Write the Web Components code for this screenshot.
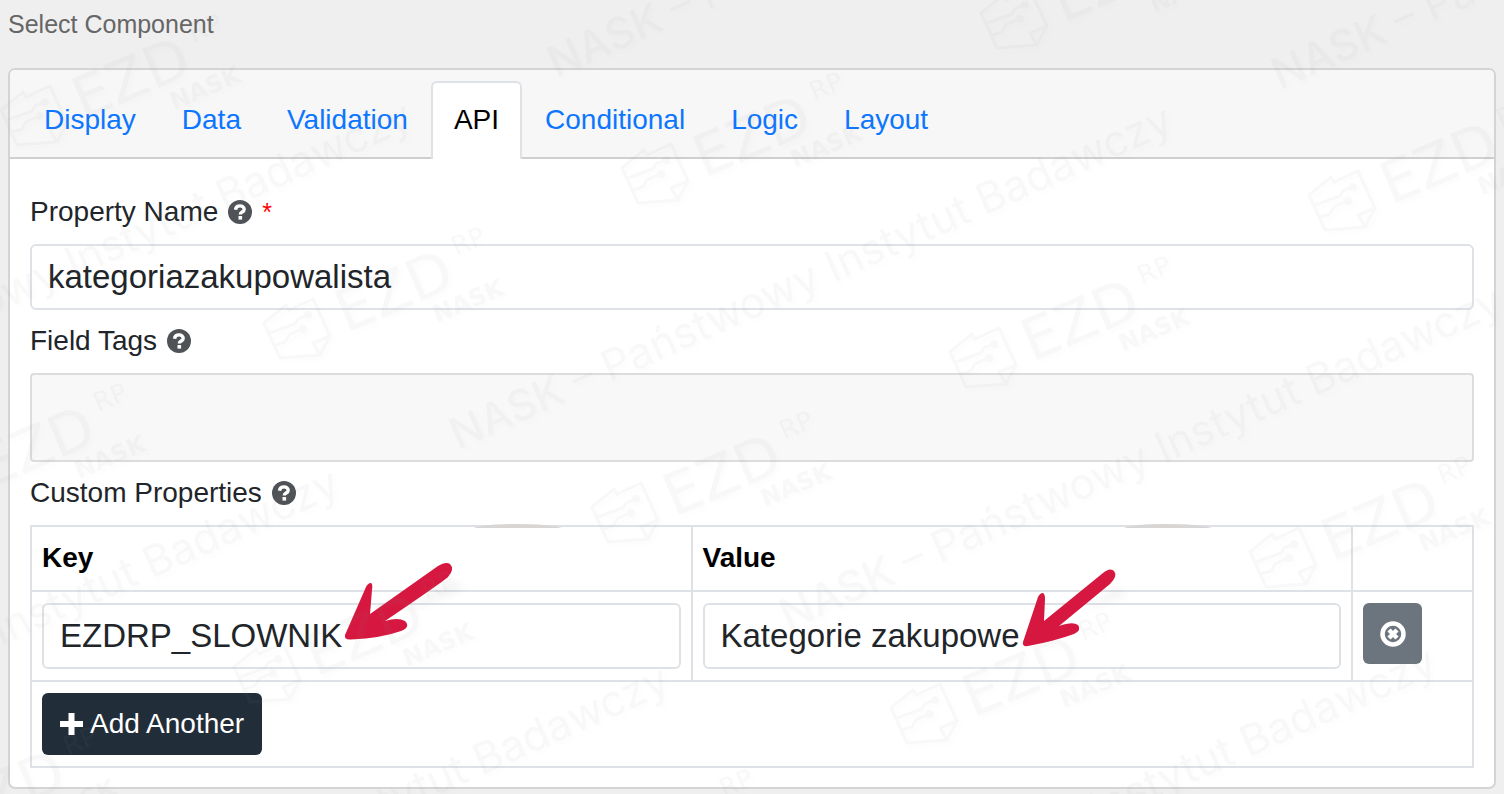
<!DOCTYPE html>
<html lang="en">
<head>
<meta charset="utf-8">
<title>Select Component</title>
<style>
  body {
    margin: 0;
    background: #efefef;
    color: #212529;
    font-family: "Liberation Sans", Arial, sans-serif;
    font-size: 28px;
    line-height: 42px;
  }
</style>
</head>
<body>
<component-editor></component-editor>

<script>
class HelpIcon extends HTMLElement {
  constructor() {
    super();
    this.attachShadow({ mode: 'open' });
    this.shadowRoot.innerHTML = `
      <style>
        :host { display: inline-flex; color: #4f5256; }
        svg { width: 24px; height: 24px; }
      </style>
      <svg viewBox="0 0 24 24" aria-hidden="true">
        <circle cx="12" cy="12" r="12" fill="currentColor"/>
        <path d="M7.500 9.800C7.800 7 9.800 5.900 12 5.900c2.300 0 4.200 1.200 4.200 3.300 0 2.900-3.900 2.700-3.900 5.300" fill="none" stroke="#fff" stroke-width="3.400"/>
        <rect x="10.500" y="16" width="3.600" height="3.600" fill="#fff"/>
      </svg>
    `;
  }
}

customElements.define('help-icon', HelpIcon);

class NavTabs extends HTMLElement {
  constructor() {
    super();
    this.attachShadow({ mode: 'open' });
    this.shadowRoot.innerHTML = `
      <style>
        :host {
          display: block;
          background: #f7f7f7;
          border-bottom: 2px solid #cfcfcf;
          border-radius: 5px 5px 0 0;
        }
        nav {
          display: flex;
          padding: 11px 11px 0;
          margin-bottom: -2px;
        }
        a {
          padding: 16px 21px 18px;
          border: 2px solid transparent;
          border-bottom: 0;
          border-radius: 6px 6px 0 0;
          color: #0d76ff;
          text-decoration: none;
        }
        a.active {
          color: #000;
          background: #fff;
          border-color: #dee2e6;
        }
      </style>
      <nav></nav>
    `;
  }

  connectedCallback() {
    const nav = this.shadowRoot.querySelector('nav');
    this.getAttribute('tabs').split(',').forEach((name) => {
      const link = document.createElement('a');
      link.href = '#' + name.toLowerCase();
      link.textContent = name;
      if (name === this.getAttribute('active')) {
        link.className = 'active';
        link.setAttribute('aria-current', 'page');
      }
      nav.appendChild(link);
    });
  }
}

customElements.define('nav-tabs', NavTabs);

class TextField extends HTMLElement {
  constructor() {
    super();
    this.attachShadow({ mode: 'open' });
    this.shadowRoot.innerHTML = `
      <style>
        :host { display: block; }
        label {
          display: flex;
          align-items: center;
          gap: 10px;
          margin-bottom: 11px;
        }
        label[hidden] { display: none; }
        .required { color: #f00; font-size: 25px; }
        input {
          display: block;
          box-sizing: border-box;
          width: 100%;
          height: 66px;
          padding: 0 16px;
          border: 2px solid #dee2e6;
          border-radius: 6px;
          background: #fff;
          color: #212529;
          font-family: inherit;
          font-size: 33px;
        }
        :host([tags]) input {
          height: 89px;
          background: #f8f8f8;
          border-color: #dcdcdc;
          border-radius: 4px;
        }
      </style>
      <label for="field"><span class="text"></span><help-icon></help-icon></label>
      <input id="field" type="text">
    `;
  }

  connectedCallback() {
    const label = this.shadowRoot.querySelector('label');
    const input = this.shadowRoot.querySelector('input');
    input.value = this.getAttribute('value') || '';
    if (this.hasAttribute('label')) {
      label.querySelector('.text').textContent = this.getAttribute('label');
    } else {
      label.hidden = true;
      input.setAttribute('aria-label', this.getAttribute('name'));
    }
    if (this.hasAttribute('required')) {
      const star = document.createElement('span');
      star.className = 'required';
      star.textContent = '*';
      label.appendChild(star);
    }
  }
}

customElements.define('text-field', TextField);

class PropertyGrid extends HTMLElement {
  constructor() {
    super();
    this.attachShadow({ mode: 'open' });
    this.shadowRoot.innerHTML = `
      <style>
        :host { display: block; }
        .title {
          display: flex;
          align-items: center;
          gap: 10px;
          margin-bottom: 11px;
        }
        table {
          width: 100%;
          table-layout: fixed;
          border-collapse: collapse;
        }
        .actions { width: 121px; }
        th, td {
          box-sizing: border-box;
          padding: 11px 10px;
          border: 2px solid #dee2e6;
          text-align: left;
          vertical-align: top;
        }
        th {
          padding-top: 10px;
          color: #000;
        }
        button {
          display: flex;
          align-items: center;
          justify-content: center;
          border: 0;
          border-radius: 6px;
          color: #fff;
          font-family: inherit;
          font-size: 28px;
        }
        .remove {
          width: 59px;
          height: 61px;
          background: #6c757d;
        }
        .add {
          gap: 7px;
          height: 62px;
          padding: 0 18px;
          background: #212d39;
        }
      </style>
      <div class="title"><span id="title">Custom Properties</span><help-icon></help-icon></div>
      <table aria-labelledby="title">
        <colgroup><col><col><col class="actions"></colgroup>
        <thead>
          <tr><th>Key</th><th>Value</th><th></th></tr>
        </thead>
        <tbody>
          <tr>
            <td><text-field name="Key" value="EZDRP_SLOWNIK"></text-field></td>
            <td><text-field name="Value" value="Kategorie zakupowe"></text-field></td>
            <td>
              <button class="remove" type="button" aria-label="Remove row">
                <svg width="26" height="26" viewBox="0 0 26 26">
                  <circle cx="13" cy="13" r="10.500" fill="none" stroke="#fff" stroke-width="4.500"/>
                  <path d="M9 9l8 8M17 9l-8 8" stroke="#fff" stroke-width="4.500"/>
                </svg>
              </button>
            </td>
          </tr>
          <tr>
            <td colspan="3">
              <button class="add" type="button">
                <svg width="23" height="23" viewBox="0 0 23 23" aria-hidden="true">
                  <path d="M11.500 0v22M0 11h23" stroke="#fff" stroke-width="6"/>
                </svg>
                <span>Add Another</span>
              </button>
            </td>
          </tr>
        </tbody>
      </table>
    `;
  }
}

customElements.define('property-grid', PropertyGrid);

// red arrows that point at the key and the value
class ArrowLayer extends HTMLElement {
  constructor() {
    super();
    this.attachShadow({ mode: 'open' });
    this.shadowRoot.innerHTML = `
      <style>
        :host {
          position: absolute;
          inset: 0;
          overflow: hidden;
          pointer-events: none;
        }
        .arrow { fill: #d6173f; }
        .shade { fill: #000; opacity: .04; filter: blur(4px); }
        .smudge { fill: #d8d6d5; }
      </style>
      <svg width="1504" height="794" aria-hidden="true">
        <path class="smudge" d="M474 528q10-4 42-4t46 4zM1124 528q10-4 42-4t46 4z"/>
        <path class="shade" d="M400 612L452 580l16 8-40 16zM1075 620l40-34 14 8-40 16z"/>
        <path class="arrow" d="M345 635L366 587Q368 583 371 583Q373 584 372 590L370 614L438 566Q446 561 450 564Q455 569 448 577Q444 581 385 621Q398 617 405 621Q411 627 401 631Q382 638 351 639.500Q344 640 345 635Z"/>
        <path class="arrow" d="M1023 642L1038 597Q1040 593 1043 593Q1045 594 1045 599L1044 621L1103 573Q1110 567 1114 571Q1118 576 1110 584L1059 626Q1073 621 1078 625Q1082 630 1074 634Q1055 641 1028 646Q1022 647 1023 642Z"/>
      </svg>
    `;
  }
}

customElements.define('arrow-layer', ArrowLayer);

// left tip of each tilted logo
const LOGOS = [
  [1, 110], [-94, 479], [264, 323], [622, 168], [981, 13],
  [-124, 823], [234, 667], [592, 507], [950, 352], [1309, 195],
  [532, 865], [891, 708], [1250, 552]
];

// baseline start of each tilted line
const LINES = [
  [556, 78], [1280, 90], [-302, 446], [458, 450],
  [788, 631], [-375, 813], [-45, 1010], [722, 992]
];

class WaterMark extends HTMLElement {
  constructor() {
    super();
    this.attachShadow({ mode: 'open' });
    this.shadowRoot.innerHTML = `
      <style>
        :host {
          position: absolute;
          inset: 0;
          overflow: hidden;
          pointer-events: none;
          opacity: .06;
        }
        svg { filter: drop-shadow(3px 3px 2px rgba(144, 144, 144, .4)); }
        text { fill: #909090; }
        .ezd { font: 58px "DejaVu Sans", sans-serif; }
        .rp { font: 26px "DejaVu Sans", sans-serif; }
        .nask { font: bold 24px "DejaVu Sans", sans-serif; }
        .line { font: 43px Inter, sans-serif; }
        .line tspan { font-weight: 500; }
        path { fill: none; stroke: #909090; stroke-width: 3; }
        circle { fill: #909090; }
      </style>
      <svg width="1504" height="794" aria-hidden="true"></svg>
    `;
  }

  connectedCallback() {
    const logos = LOGOS.map(([x, y]) => `
      <g transform="translate(${x} ${y})">
        <path d="M0 0L22-18L25-13L49-24L66 13L56 32L16 35ZM66 13L49 20L56 32M6 10L31 1L34-4L43-8M11 22L21 19L25 12L38 6"/>
        <circle cx="44" cy="-8" r="4"/>
        <circle cx="39" cy="6" r="4"/>
        <text class="ezd" transform="translate(82 10) rotate(-23)">EZD</text>
        <text class="rp" transform="translate(192 -67) rotate(-23)">RP</text>
        <text class="nask" transform="translate(173 0) rotate(-23)">NASK</text>
      </g>`);
    const lines = LINES.map(([x, y]) => `
      <text class="line" transform="translate(${x} ${y}) rotate(-24)"><tspan>NASK</tspan> – Państwowy Instytut Badawczy</text>`);
    this.shadowRoot.querySelector('svg').innerHTML = logos.join('') + lines.join('');
  }
}

customElements.define('water-mark', WaterMark);

class ComponentEditor extends HTMLElement {
  constructor() {
    super();
    this.attachShadow({ mode: 'open' });
    this.shadowRoot.innerHTML = `
      <style>
        :host {
          display: block;
          position: relative;
          overflow: hidden;
          padding: 8px 8px 5px;
        }
        h1 {
          margin: 0 0 28px;
          color: #666;
          font-size: 25px;
          font-weight: normal;
          line-height: 32px;
        }
        .card {
          background: #fff;
          border: 2px solid #d4d4d4;
          border-radius: 7px;
        }
        .body {
          display: flex;
          flex-direction: column;
          gap: 10px;
          padding: 32px 20px 19px;
        }
      </style>
      <h1>Select Component</h1>
      <div class="card">
        <nav-tabs tabs="Display,Data,Validation,API,Conditional,Logic,Layout" active="API"></nav-tabs>
        <div class="body">
          <text-field label="Property Name" value="kategoriazakupowalista" required></text-field>
          <text-field label="Field Tags" tags></text-field>
          <property-grid></property-grid>
        </div>
      </div>
      <arrow-layer></arrow-layer>
      <water-mark></water-mark>
    `;
  }
}

customElements.define('component-editor', ComponentEditor);
</script>
</body>
</html>
